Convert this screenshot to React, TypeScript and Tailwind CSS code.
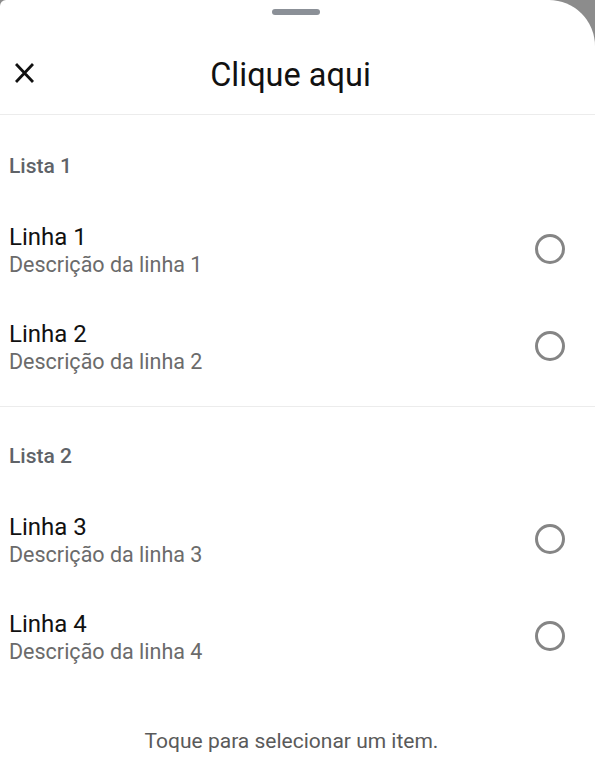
import React from "react";

const Radio = () => (
  <div className="w-[30px] h-[30px] rounded-full border-[3px] border-[#858585] shrink-0 mb-[4px]" />
);

const Row = ({ title, desc }: { title: string; desc: string }) => (
  <div className="flex items-center justify-between pl-[9px] pr-[30px] h-[97px]">
    <div className="flex flex-col">
      <span className="text-[24px] leading-[28px] text-[#111]">{title}</span>
      <span className="text-[21.5px] leading-[27px] text-[#6b6b6b]">{desc}</span>
    </div>
    <Radio />
  </div>
);

export default function App() {
  return (
    <div className="w-[595px] h-[777px] bg-[#8c8c8c] overflow-hidden" style={{ fontFamily: "Roboto, sans-serif" }}>
      <div className="w-full h-full bg-white rounded-tr-[46px] rounded-tl-[6px] flex flex-col">
        <div className="flex justify-center pt-[9px] pr-[4px]">
          <div className="w-[48px] h-[6px] rounded-full bg-[#8b9097]" />
        </div>
        <div className="relative h-[100px] flex items-center justify-center border-b border-[#ececec] pt-[20px]">
          <svg className="absolute left-[15px] top-[48px]" width="19" height="20" viewBox="0 0 19 20" fill="none" stroke="#111" strokeWidth="2.8">
            <path d="M1 1 L18 19 M18 1 L1 19" />
          </svg>
          <span className="text-[32.5px] leading-[38px] text-[#111] pr-[14px]">Clique aqui</span>
        </div>
        <div className="border-b border-[#ececec] pb-[10px]">
          <div className="pl-[9px] pt-[39px] pb-[24px] text-[21px] leading-[24px] text-[#5f6368] font-medium">Lista 1</div>
          <Row title="Linha 1" desc="Descrição da linha 1" />
          <Row title="Linha 2" desc="Descrição da linha 2" />
        </div>
        <div>
          <div className="pl-[9px] pt-[37px] pb-[24px] text-[21px] leading-[24px] text-[#5f6368] font-medium">Lista 2</div>
          <Row title="Linha 3" desc="Descrição da linha 3" />
          <Row title="Linha 4" desc="Descrição da linha 4" />
        </div>
        <div className="text-center text-[21px] leading-[24px] text-[#5a5a5a] mt-[43px] pr-[12px]">Toque para selecionar um item.</div>
      </div>
    </div>
  );
}
